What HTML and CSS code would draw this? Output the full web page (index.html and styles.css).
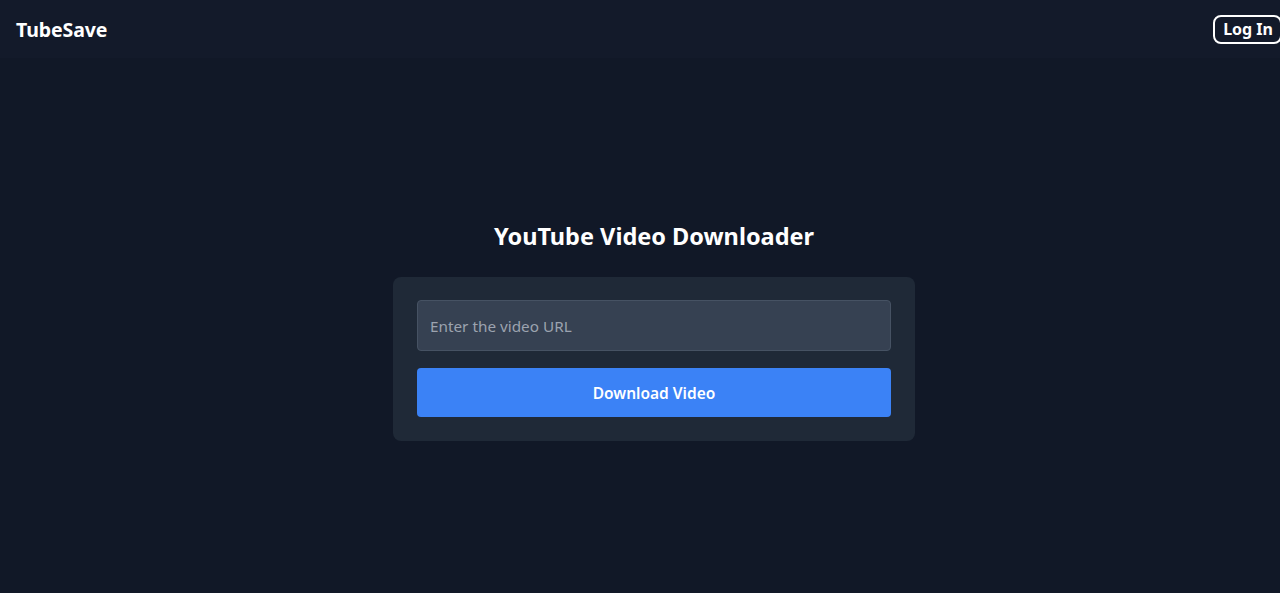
FILE: index.html
```html
<!DOCTYPE html>
<html lang="en">
<head>
<meta charset="utf-8">
<title>TubeSave</title>
<link rel="stylesheet" href="styles.css">
</head>
<body>
<header class="topbar">
  <div class="brand">TubeSave</div>
  <button class="login">Log In</button>
</header>
<main class="main">
  <h1 class="title">YouTube Video Downloader</h1>
  <form class="card">
    <input class="url" type="text" placeholder="Enter the video URL">
    <button class="download" type="button">Download Video</button>
  </form>
</main>
</body>
</html>
```

FILE: styles.css
```css
* { box-sizing: border-box; }
html, body { margin: 0; padding: 0; }
body {
  background: #111827;
  color: #fff;
  font-family: "Noto Sans", "Open Sans", sans-serif;
  height: 593px;
  overflow: hidden;
}
.topbar {
  height: 58px;
  background: #131a2a;
  display: flex;
  align-items: center;
  justify-content: space-between;
  padding: 0 0 0 16px;
}
.brand {
  font-weight: 700;
  font-size: 19.5px;
  letter-spacing: -0.1px;
}
.login {
  background: transparent;
  color: #fff;
  border: 2px solid #fff;
  border-radius: 8px;
  font-family: inherit;
  font-weight: 700;
  font-size: 16px;
  padding: 0 7px 0 8px;
  height: 29px;
  margin-right: -2px;
}
.main {
  display: flex;
  flex-direction: column;
  align-items: center;
  padding-top: 162px;
  padding-left: 28px;
}
.title {
  margin: 0 0 25px;
  font-size: 23.5px;
  font-weight: 700;
  line-height: 32px;
}
.card {
  width: 522px;
  background: #1f2937;
  border-radius: 8px;
  padding: 23px 24px 24px;
  display: flex;
  flex-direction: column;
  gap: 17px;
}
.url {
  height: 51px;
  background: #364152;
  border: 1px solid #465263;
  border-radius: 4px;
  padding: 0 12px;
  color: #fff;
  font-family: inherit;
  font-size: 15.3px;
}
.url::placeholder { color: #9ca3af; }
.download {
  height: 49px;
  background: #3b82f6;
  color: #fff;
  border: none;
  border-radius: 4px;
  font-family: inherit;
  font-size: 15.5px;
  font-weight: 600;
}
```
